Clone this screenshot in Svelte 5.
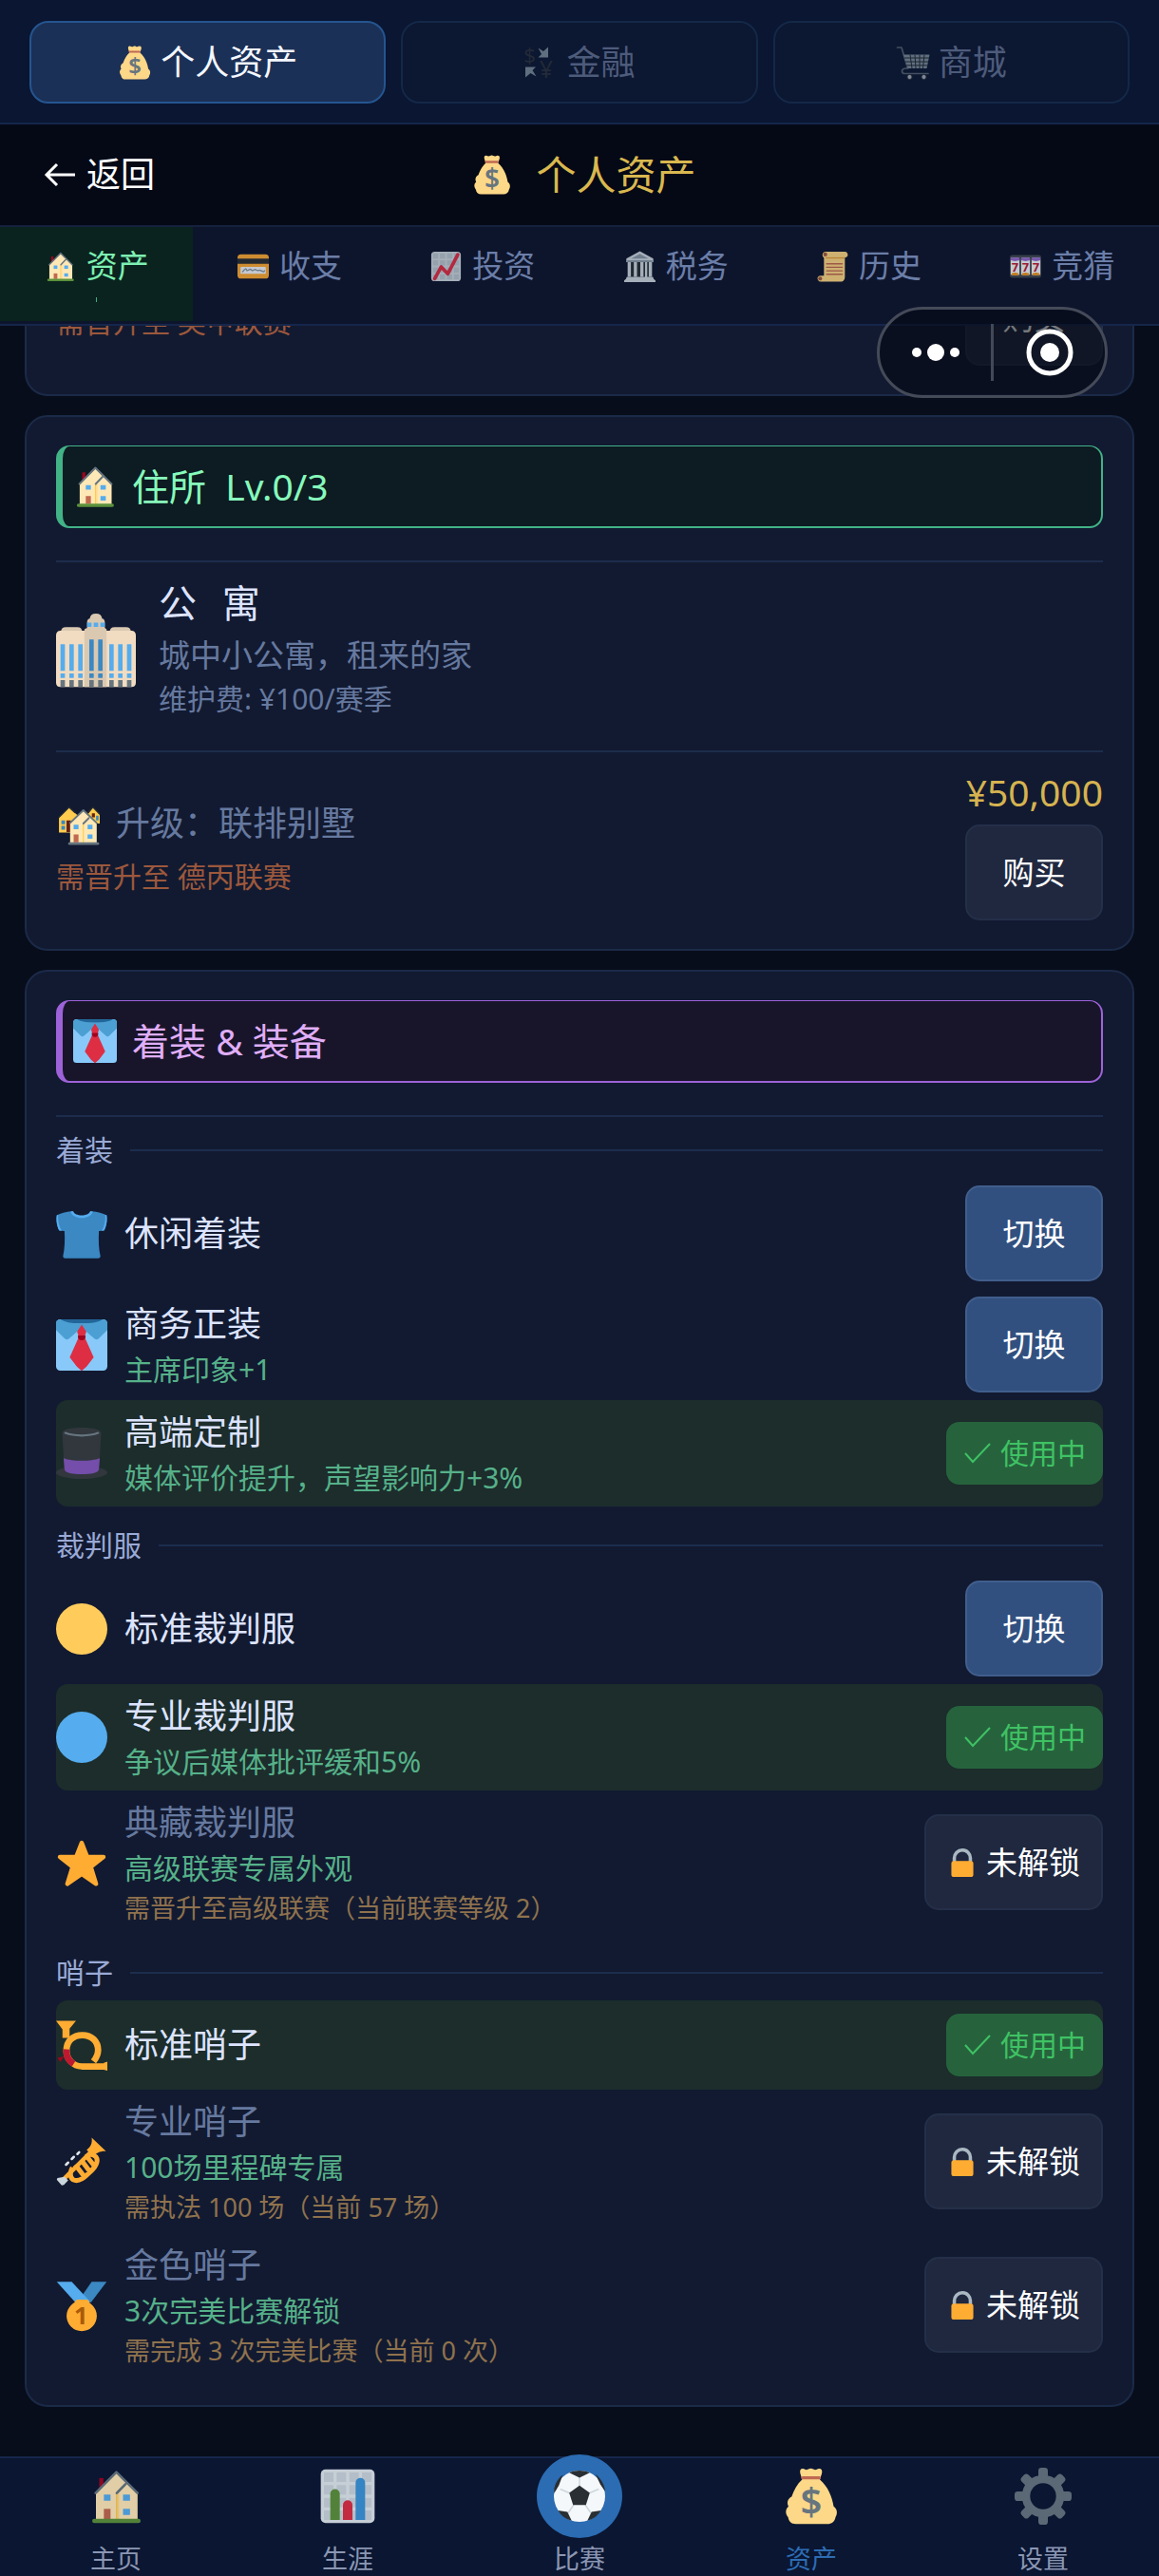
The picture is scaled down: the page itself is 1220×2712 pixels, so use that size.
<script>
  import { onMount } from 'svelte';

  const sections = [
    { icon: 'bag', label: '个人资产', active: true },
    { icon: 'exchange', label: '金融' },
    { icon: 'cart', label: '商城' }
  ];

  const tabs = [
    { icon: 'house', label: '资产', active: true },
    { icon: 'card', label: '收支' },
    { icon: 'trend', label: '投资' },
    { icon: 'bank', label: '税务' },
    { icon: 'scroll', label: '历史' },
    { icon: 'slots', label: '竞猜' }
  ];

  const groups = [
    {
      title: '着装',
      items: [
        { icon: 'tshirt', name: '休闲着装', state: 'owned' },
        { icon: 'tie', name: '商务正装', effect: '主席印象+1', state: 'owned' },
        { icon: 'hat', name: '高端定制', effect: '媒体评价提升，声望影响力+3%', state: 'active' }
      ]
    },
    {
      title: '裁判服',
      items: [
        { icon: 'yellow', name: '标准裁判服', state: 'owned' },
        { icon: 'blue', name: '专业裁判服', effect: '争议后媒体批评缓和5%', state: 'active' },
        { icon: 'star', name: '典藏裁判服', effect: '高级联赛专属外观', need: '需晋升至高级联赛（当前联赛等级 2）', state: 'locked' }
      ]
    },
    {
      title: '哨子',
      items: [
        { icon: 'horn', name: '标准哨子', state: 'active' },
        { icon: 'trumpet', name: '专业哨子', effect: '100场里程碑专属', need: '需执法 100 场（当前 57 场）', state: 'locked' },
        { icon: 'medal', name: '金色哨子', effect: '3次完美比赛解锁', need: '需完成 3 次完美比赛（当前 0 次）', state: 'locked' }
      ]
    }
  ];

  const nav = [
    { icon: 'house', label: '主页' },
    { icon: 'bars', label: '生涯' },
    { icon: 'ball', label: '比赛', center: true },
    { icon: 'bag', label: '资产', active: true },
    { icon: 'gear', label: '设置' }
  ];

  let scroller;
  onMount(() => {
    scroller.scrollTop = scroller.scrollHeight;
  });
</script>

{#snippet houseShape()}
  <path fill="#a0041e" d="M7.5 6.5h2.6v7H7.5z" />
  <path fill="#ffe8b6" d="M5.4 16 18.3 3.5 31.7 16v17H5.4z" />
  <path fill="#ffcc4d" d="M18 16.5h1V33h-1z" />
  <path fill="#ffd983" d="M19 16.5h1V33h-1z" />
  <path fill="none" stroke="#66757f" stroke-width="1.6" stroke-linecap="round" stroke-linejoin="round" d="M5.2 16 18.3 2.8 31.6 16M18.6 16l5.4-5.6" />
  <path fill="#55acee" d="M10.4 17h4.2v3.8h-4.2zM22.5 17h4.4v3.8h-4.4zM22.5 26h4.4v3.8h-4.4z" />
  <path fill="#c1694f" d="M10.4 26h4.2v6.4h-4.2z" />
  <rect x="3" y="32.2" width="30.6" height="2.8" rx="1.4" fill="#5c913b" />
{/snippet}

{#snippet icon(name)}
  <svg class="icon" viewBox="0 0 36 36" aria-hidden="true">
    {#if name === 'bag'}
      <path fill="#fdd888" d="M12.2 7.5 11 3.4C10.6 1.6 11.3.4 12.8.6c1 .2 1.3.7 2.2.7s1.4-.8 2.700-.8 1.700.8 2.700.8 1.400-.6 2.400-.7c1.500-.2 2.300 1 1.900 2.800l-1.300 4.100c5.200 4.500 7.800 11 8.700 16.900 2.200 1.400 2.700 4.500 1.200 6.800-.5 2.900-2.500 4.400-5.100 4.400H8.200c-2.900 0-4.500-1.700-4.800-4.200-1.900-2.300-1.900-5 .2-6.900-1.300-2.400-.5-5 2-6.200 1.400-4 3.400-8 6.600-10.800z" />
      <rect x="11.6" y="5.4" width="12.4" height="2" rx=".9" fill="#bf6952" />
      <text x="18" y="30" text-anchor="middle" font-size="24" font-weight="600" fill="#67757f">$</text>
    {:else if name === 'exchange'}
      <text x="6.5" y="18" text-anchor="middle" font-size="22" fill="#31373d">$</text>
      <text x="24" y="34" text-anchor="middle" font-size="25" fill="#31373d">¥</text>
      <path fill="#99aab5" d="M26 1.500V12.500H15.500l3.500-3.500L15.500 2.500l5.500 3.500zM2 33.500V22.500h11l-3.500 3.500 4 6.500-6-3.500z" />
    {:else if name === 'cart'}
      <path fill="none" stroke="#66757f" stroke-width="1.7" stroke-linecap="round" stroke-linejoin="round" d="M1.500 2H6l6.500 22H9.500c-4 .5-4 5.500 0 5.500H34" />
      <path fill="#99aab5" d="M8 9.500h27.500L32.500 24h-20z" />
      <path fill="none" stroke="#292f33" stroke-width="1" d="M9 13h26M10 17h24M11 20.800h22M15 9.500l2 14.500M20 9.500l1 14.500M25 9.500V24M30 9.500 28.500 24" />
      <circle cx="14.5" cy="33" r="2.6" fill="#ccd6dd" stroke="#292f33" />
      <circle cx="29.5" cy="33" r="2.6" fill="#ccd6dd" stroke="#292f33" />
    {:else if name === 'house'}
      {@render houseShape()}
    {:else if name === 'houses'}
      <path fill="#ffcc4d" d="M2.400 13 10.700 5l9 8v12.400H2.400zM25 12l5.400-7 5.600 6v7h-8z" />
      <path fill="none" stroke="#292f33" stroke-width="1" stroke-linejoin="round" d="M2.200 13.200 10.700 4.600l5 4.600M26 9l4.400-4.400L36 10.200" />
      <path fill="#662113" d="M8.600 15.500h3.600V25H8.600zM29.500 9.500H32V13h-2.500z" />
      <path fill="#3b88c3" d="M4.400 15.500h3v3h-3zM4.400 20h3v3h-3zM33 11.500h2v4h-2z" />
      <path fill="#ffe8b6" d="M11.600 17.500 22.500 7.500l11 10V34H11.600z" />
      <path fill="#ffcc4d" d="M22 17.500h.9V34H22z" />
      <path fill="none" stroke="#66757f" stroke-width="1.5" stroke-linecap="round" stroke-linejoin="round" d="M11.600 17.500 22.500 7l11 10.500M22.500 18l4.500-4.500" />
      <path fill="#55acee" d="M14.500 19h4v3.600h-4zM26 19h4v3.600h-4zM26 27h4v3.600h-4z" />
      <path fill="#c1694f" d="M14.500 27h4v6.500h-4z" />
      <rect x="10" y="33.5" width="25.5" height="2.2" rx="1.1" fill="#66757f" />
    {:else if name === 'card'}
      <rect y="4" width="36" height="28" rx="4" fill="#ffac33" />
      <path fill="#292f33" d="M0 9h36v6H0z" />
      <rect x="3.5" y="18.5" width="29" height="8" rx="1" fill="#f4f7f9" />
      <path fill="none" stroke="#8899a6" stroke-width="1.5" stroke-linecap="round" d="M6 24c3-4 4-4 4.500-1.500 2 1.500 3-3 5.500-.5s3-2 5.500 0 3-1 6 1 3 .5 3.500 0" />
    {:else if name === 'trend'}
      <rect x="1" y="1" width="34" height="34" rx="4" fill="#ccd6dd" />
      <path fill="#b8c5ce" d="M3 3h6v6H3zM11 3h6v6h-6zM19 3h6v6h-6zM27 3h6v6h-6zM3 11h6v6H3zM11 11h6v6h-6zM19 11h6v6h-6zM27 11h6v6h-6zM3 19h6v6H3zM11 19h6v6h-6zM19 19h6v6h-6zM27 19h6v6h-6zM3 27h6v6H3zM11 27h6v6h-6zM19 27h6v6h-6zM27 27h6v6h-6z" />
      <path fill="none" stroke="#dd2e44" stroke-width="4" stroke-linecap="round" stroke-linejoin="round" d="m5 32 7.500-13.500L20 26.500 31.500 4.500" />
    {:else if name === 'bars'}
      <rect x="1" y="1" width="34" height="34" rx="3" fill="#e1e8ed" />
      <path fill="#ccd6dd" d="M3 3h6v6H3zM11 3h6v6h-6zM19 3h6v6h-6zM27 3h6v6h-6zM3 11h6v6H3zM11 11h6v6h-6zM19 11h6v6h-6zM27 11h6v6h-6zM3 19h6v6H3zM11 19h6v6h-6zM19 19h6v6h-6zM27 19h6v6h-6zM3 27h6v6H3zM11 27h6v6h-6zM19 27h6v6h-6zM27 27h6v6h-6z" />
      <path fill="#5c913b" d="M7 33V16.500a3 3 0 0 1 6 0V33z" />
      <path fill="#dd2e44" d="M15 33v-9.500a3 3 0 0 1 6 0V33z" />
      <path fill="#3b94d9" d="M23 33V9.500a3 3 0 0 1 6 0V33z" />
    {:else if name === 'bank'}
      <path fill="#ccd6dd" d="M18 .5 2.500 9v4h31V9z" />
      <path fill="#8899a6" d="M18 3.500 8 9h20zM3.500 11h29v2h-29z" />
      <path fill="#ccd6dd" d="M4 13h4v17H4zM11 13h4v17h-4zM18.500 13h4v17h-4zM28 13h4v17h-4z" />
      <path fill="#292f33" d="M8 13h3v17H8zM15 13h3.500v17H15zM22.500 13H28v17h-5.500z" />
      <path fill="#ccd6dd" d="M24 13h2.500v17H24zM3 30h30l1 2.500 2 1.500v2H0v-2l2-1.500z" />
    {:else if name === 'scroll'}
      <path fill="#ffd983" d="M10 1h22c4 0 4.500 6.500 1 6.500h-1V30c0 3-1.500 5.500-5 5.500H4c-4 0-5-7 0-7h4V8C5 6 6 1 10 1z" />
      <path fill="#e39f3d" d="M10 7.500h22V9H10z" />
      <circle cx="9.5" cy="4.3" r="2.3" fill="#9f5c3f" />
      <circle cx="3.6" cy="32" r="2.3" fill="#9f5c3f" />
      <path fill="none" stroke="#c1694f" stroke-width="1.5" stroke-linecap="round" d="M11 15h18M11 19h18M11 23h18M11 27h18" />
    {:else if name === 'slots'}
      <rect y="5" width="36" height="26" rx="3" fill="#414a50" />
      {#each [1, 13, 25] as x}
        <rect {x} y="8" width="10" height="20" rx="1.5" fill="#f5f8fa" />
        <path fill="#9266cc" d="M{x} 8h10v3l-5 1-5-1z" />
        <path fill="#f4900c" d="M{x + 1} 28v-2l4-1 4 1v2z" />
        <text x={x + 5} y="24" text-anchor="middle" font-size="14" font-weight="700" fill="#be1931">7</text>
      {/each}
    {:else if name === 'building'}
      <path fill="#dac8b1" d="M2.200 11c0-1.500.8-2.300 2.200-2.300h5.200c1.400 0 2.200.8 2.200 2.300zM24.200 11c0-1.500.8-2.300 2.200-2.300h5.200c1.400 0 2.200.8 2.200 2.300z" />
      <path fill="#f1dcc1" d="M2 10.300h32c1.200 0 2 .8 2 2v21.400c0 1.200-.8 2-2 2H2c-1.200 0-2-.8-2-2V12.300c0-1.200.8-2 2-2z" />
      <path fill="#dac8b1" d="M14 9V6.400c0-1 .6-1.500 1.200-1.600.2-1.400 1.100-2.200 2.800-2.200s2.600.8 2.800 2.200c.6.100 1.200.6 1.200 1.600V9l.8.600v26.100h-10V9.600z" />
      <path fill="#55acee" d="M14 6.600h2v2h-2zM17 6.600h2v2h-2zM20 6.600h2v2h-2zM2 16.400h2v12H2zM6 16.400h2v12H6zM10 16.400h2v12h-2zM24 16.400h2v12h-2zM28 16.400h2v12h-2zM32 16.400h2v12h-2zM2 29.600h2v2H2zM6 29.600h2v2H6zM10 29.600h2v2h-2zM24 29.600h2v2h-2zM28 29.600h2v2h-2zM32 29.600h2v2h-2z" />
      <path fill="#3b88c3" d="M15 14.300h2v14.100h-2zM19 14.300h2v14.100h-2zM15 29.600h2v2h-2zM19 29.600h2v2h-2z" />
      <path fill="#66757f" d="M2 32.600h2v3.100H2zM6 32.600h2v3.100H6zM10 32.600h2v3.100h-2zM15 32.600h2v3.100h-2zM19 32.600h2v3.100h-2zM24 32.600h2v3.100h-2zM28 32.600h2v3.100h-2zM32 32.600h2v3.100h-2z" />
    {:else if name === 'tie'}
      <rect width="36" height="36" rx="3" fill="#88c9f9" />
      <path fill="#226699" d="M3 0h30l-3 3H6z" />
      <path fill="#4b9fd3" d="M3 0C1.200 0 0 1.200 0 3v4.500l6.300 6.200c.8.700 1.800.7 2.600 0L15 8.500h6l6.100 5.200c.8.700 1.800.7 2.600 0L36 7.500V3c0-1.800-1.200-3-3-3-3.500 2-8.500 3-15 3S6.500 2 3 0z" />
      <path fill="#88c9f9" d="M12.500 11 15 8.500h6l2.500 2.500L21 16h-6z" />
      <path fill="#dd2e44" d="m18 3.600 3.200 5-1.200 3.700 6.400 14.400-5 6.500-3.400 3-3.400-3-5-6.500L16 12.300l-1.200-3.700z" />
      <path fill="#a0041e" d="M15.300 11.300h5.400c.2 2.200-.9 3.400-2.700 3.400s-2.900-1.200-2.700-3.400z" />
    {:else if name === 'tshirt'}
      <path fill="#3b88c3" d="M11 2.200C7 2.500 3 3.700.5 5c-.6 3.600.3 8 1.800 10.700l3.600.3c.4 6 .2 12.500-1 17.500 0 1.200.6 1.600 1.500 1.600h23.200c.9 0 1.500-.4 1.500-1.600-1.200-5-1.400-11.500-1-17.500l3.600-.3C35.200 13 36.100 8.600 35.500 5 33 3.700 29 2.500 25 2.200c-1 4.500-13 4.500-14 0z" />
      <path fill="#55acee" d="M10.200 2.300 12 2c1 4 11 4 12 0l1.800.3c-1.300 6-14.300 6-15.600 0zM.5 5l1-.5c-.3 4.500.5 8 2.500 11.400l-1.700-.2C.6 13 0 8.600.5 5zM35.500 5l-1-.5c.3 4.500-.5 8-2.500 11.400l1.700-.2C35.400 13 36 8.600 35.500 5z" />
    {:else if name === 'hat'}
      <ellipse cx="18" cy="31.5" rx="18" ry="4.5" fill="#31373d" />
      <path fill="#31373d" d="M4.300 3.500C4.300 1.500 10 0 18 0s13.700 1.500 13.700 3.500C31 14 30.500 25 30.500 28c0 3.500-5 4.500-12.500 4.500S5.500 31.500 5.500 28c0-3-.5-14-1.200-24.500z" />
      <path fill="#744eaa" d="M5.300 21.500c6 2.300 19.400 2.300 25.400 0l-.7 8c-.4 2.200-5.500 3.200-12 3.200s-11.600-1-12-3.200z" />
      <path fill="none" stroke="#66757f" stroke-width="1.5" stroke-linecap="round" d="M6.500 3.700c6 2.400 17 2.400 23 0" />
    {:else if name === 'yellow'}
      <circle cx="18" cy="18" r="18" fill="#ffcc5c" />
    {:else if name === 'blue'}
      <circle cx="18" cy="18" r="18" fill="#55acee" />
    {:else if name === 'star'}
      <path fill="#ffac33" stroke="#ffac33" stroke-width="3" stroke-linejoin="round" d="m18 4 3.900 10H33.300L24.400 20.900l3.700 12L18 26l-10.100 6.900 3.700-12L2.700 14h11.400z" />
    {:else if name === 'horn'}
      <path fill="#ffac33" d="M0 1h14l-4.500 5.500V13H4.500V7z" />
      <path fill="none" stroke="#ffac33" stroke-width="4.5" d="M35 33H18A11 11 0 0 1 7.300 22C7.300 15 12 11 18.500 11s11 4.500 11 10.500c0 3.500-1.200 5.500-3.200 8" />
      <path fill="none" stroke="#be1931" stroke-width="4.5" d="M7.300 21a11 11 0 0 0 5 10.300" />
      <path fill="#a0041e" d="m1 27 4.500-1L3 30l-1.200-1.800z" />
      <path fill="#ffac33" d="m33.500 30.500 2.500-.8v6.300l-2.500-.7z" />
    {:else if name === 'trumpet'}
      <path fill="#ffac33" d="M25 1 35 10.500c-4-.3-6.500 1.200-9 3.700l-4.500-4.500C24.500 7 25.500 5 25 1z" />
      <path fill="none" stroke="#ffac33" stroke-width="3" stroke-linecap="round" d="M5 30.500 24.500 11" />
      <path fill="none" stroke="#ffac33" stroke-width="3.4" stroke-linejoin="round" d="M11.500 22c-1.800 3-2 7 .5 8.500 4 2 8-1.500 12.500-6 4.500-4 5-8 3.500-10-2-2-5-2-7 0M13.500 20l6.500 8.500M17.500 16.500l6 8M21 13.500l6 7.500" />
      <path fill="none" stroke="#e1e8ed" stroke-width="1.7" stroke-linecap="round" d="m7 20 1.500-1.500M11 16l1.500-1.500M15 12.500l1.200-1.200" />
      <path fill="#ccd6dd" d="m6 28.500 2.500 2.500-3 3.200-1.500.3L.5 30.500l.5-1.200z" />
    {:else if name === 'medal'}
      <path fill="#3b88c3" d="M25 1.500h10.500L24.500 16 17 13z" />
      <path fill="#55acee" d="M.5 1.500H11L24 15.500l-4 2-6-1z" />
      <path fill="#ffac33" d="M13 16.500c0-1.700 1-2.500 2.500-2.500h5.500c1.500 0 2.500.8 2.500 2.500z" />
      <circle cx="18" cy="25.5" r="10.6" fill="#ffac33" />
      <text x="17.5" y="31.5" text-anchor="middle" font-size="17" font-weight="700" fill="#aa5b08">1</text>
    {:else if name === 'lock'}
      <path fill="none" stroke="#aab8c2" stroke-width="4" d="M8.500 19v-6.500a9.500 9.500 0 0 1 19 0V19" />
      <rect x="5" y="16" width="26" height="19" rx="3" fill="#ffac33" />
    {:else if name === 'ball'}
      <circle cx="18" cy="18" r="18" fill="#f5f8fa" />
      <path fill="none" stroke="#ccd6dd" stroke-width="1" d="m18 11V3M11.500 16 4.500 13M14 24l-4.500 6.500M22 24l4.500 6.500M24.500 16l7-3" />
      <path fill="#292f33" d="m18 10.500 7.200 5.200-2.700 8.500h-9l-2.700-8.500zM10.800 1.500 18 5l7.200-3.500C20.500-.5 15.500-.5 10.800 1.500zM35.500 14l-3-4.500-3.300-7C33 5.500 35.500 9.500 36 14.500zM33 28l-6.500 1-3 6.200c4.500-1.200 7.500-3.700 9.500-7.200zM3 28l6.500 1 3 6.200C8 34 5 31.500 3 28zM.2 16l3.300-5.500 2.800-7.500C2 6-.2 11 .2 16z" />
    {:else if name === 'gear'}
      <g fill="#66757f">
        {#each [0, 45, 90, 135] as angle}
          <rect x="15" y="0" width="6" height="36" rx="2" transform="rotate({angle} 18 18)" />
        {/each}
      </g>
      <circle cx="18" cy="18" r="13.4" fill="#66757f" />
      <circle class="hub" cx="18" cy="18" r="8.2" />
    {/if}
  </svg>
{/snippet}

{#snippet upgrade(title, need, price)}
  <div class="upgrade">
    <div>
      <div class="upgrade-title">{@render icon('houses')}<span>{title}</span></div>
      <div class="upgrade-need">{need}</div>
    </div>
    <div class="buy">
      <span class="price">{price}</span>
      <button class="btn dim" type="button">购买</button>
    </div>
  </div>
{/snippet}

<div class="page">
  <nav class="sections" aria-label="板块">
    {#each sections as s}
      <button type="button" class="section" class:active={s.active}>
        {@render icon(s.icon)}<span>{s.label}</span>
      </button>
    {/each}
  </nav>

  <header class="header">
    <button class="back" type="button">
      <svg viewBox="0 0 34 28" aria-hidden="true"><path d="M33 14H3M14 3 3 14l11 11" /></svg>
      <span>返回</span>
    </button>
    <h1>{@render icon('bag')}<span>个人资产</span></h1>
  </header>

  <nav class="tabs" aria-label="资产分类">
    {#each tabs as t}
      <button type="button" class="tab" class:active={t.active}>
        <span class="tab-label">{@render icon(t.icon)}<span>{t.label}</span></span>
      </button>
    {/each}
  </nav>

  <main class="scroller" bind:this={scroller}>
    <section class="card">
      <div class="upgrade compact">
        <div class="upgrade-need">需晋升至 英甲联赛</div>
        <button class="btn dim" type="button">购买</button>
      </div>
    </section>

    <section class="card">
      <h2 class="banner green">{@render icon('house')}<span>住所&nbsp;&nbsp;Lv.0/3</span></h2>
      <div class="current">
        {@render icon('building')}
        <div>
          <div class="current-name">公&#8196;&#8196;寓</div>
          <div class="current-desc">城中小公寓，租来的家</div>
          <div class="current-fee">维护费: ¥100/赛季</div>
        </div>
      </div>
      {@render upgrade('升级：联排别墅', '需晋升至 德丙联赛', '¥50,000')}
    </section>

    <section class="card">
      <h2 class="banner purple">{@render icon('tie')}<span>着装 &amp; 装备</span></h2>
      <div class="groups">
        {#each groups as g}
          <div class="group">
            <h3>{g.title}</h3>
            {#each g.items as item}
              <div class="row {item.state}">
                <div class="row-icon">{@render icon(item.icon)}</div>
                <div class="row-text">
                  <div class="row-name">{item.name}</div>
                  {#if item.effect}<div class="row-effect">{item.effect}</div>{/if}
                  {#if item.need}<div class="row-need">{item.need}</div>{/if}
                </div>
                {#if item.state === 'owned'}
                  <button class="btn" type="button">切换</button>
                {:else if item.state === 'active'}
                  <span class="badge">
                    <svg viewBox="0 0 28 24" aria-hidden="true"><path d="m1 12 8 9L27 2" /></svg>使用中
                  </span>
                {:else}
                  <button class="btn dim" type="button">{@render icon('lock')}<span>未解锁</span></button>
                {/if}
              </div>
            {/each}
          </div>
        {/each}
      </div>
    </section>
  </main>

  <nav class="bottom" aria-label="主导航">
    {#each nav as n}
      <a href="#{n.icon}" class:active={n.active} class:center={n.center}>
        <span class="nav-icon">{@render icon(n.icon)}</span>
        <span class="nav-label">{n.label}</span>
      </a>
    {/each}
  </nav>

  <div class="capsule">
    <button type="button" aria-label="更多">
      <svg viewBox="0 0 52 20" width="52" height="20">
        <circle cx="6" cy="10" r="5" /><circle cx="26" cy="10" r="9" /><circle cx="46" cy="10" r="5" />
      </svg>
    </button>
    <i></i>
    <button type="button" aria-label="关闭">
      <svg viewBox="0 0 52 52" width="52" height="52">
        <circle class="ring" cx="26" cy="26" r="22" /><circle cx="26" cy="26" r="10" />
      </svg>
    </button>
  </div>
</div>

<style>
  :global(body) {
    background: #060c19;
  }

  .page {
    position: relative;
    display: flex;
    flex-direction: column;
    height: 100vh;
    overflow: hidden;
    background: #070d1a;
    color: #dde4ff;
    font-family: 'Noto Sans', 'Noto Sans CJK SC', sans-serif;
  }

  button {
    margin: 0;
    padding: 0;
    border: 0;
    background: none;
    color: inherit;
    font: inherit;
    cursor: pointer;
  }

  h1,
  h2,
  h3 {
    margin: 0;
    font-weight: 400;
  }

  .icon {
    display: block;
    flex: none;
    width: 36px;
    height: 36px;
    overflow: visible;
  }

  .hub {
    fill: #0a1632;
  }

  /* top sections */
  .sections {
    display: flex;
    flex: none;
    gap: 16px;
    padding: 22px 31px 20px;
    border-bottom: 2px solid #15264a;
    background: #0a1632;
  }

  .section {
    display: flex;
    flex: 1;
    align-items: center;
    justify-content: center;
    gap: 9px;
    height: 87px;
    box-sizing: border-box;
    border: 2px solid #142848;
    border-radius: 20px;
    background: #0c1731;
    color: #4d5b7b;
    font-size: 36px;
    line-height: 50px;
  }

  .section .icon {
    opacity: 0.6;
  }

  .section.active {
    border-color: #255590;
    background: #1b3056;
    color: #f4f7ff;
  }

  .section.active .icon {
    opacity: 1;
  }

  /* header */
  .header {
    display: grid;
    flex: none;
    grid-template-columns: 1fr auto 1fr;
    align-items: center;
    height: 106px;
    padding: 0 36px 0 46px;
    border-bottom: 2px solid #15213d;
    background: #050916;
  }

  .back {
    display: flex;
    align-items: center;
    gap: 11px;
    color: #fff;
    font-size: 36px;
    line-height: 50px;
  }

  .back svg {
    width: 34px;
    height: 28px;
    fill: none;
    stroke: #fff;
    stroke-width: 3;
  }

  h1 {
    display: flex;
    align-items: center;
    gap: 25px;
    color: #d9b84f;
    font-size: 42px;
    line-height: 60px;
  }

  h1 .icon {
    width: 42px;
    height: 42px;
  }

  /* tabs */
  .tabs {
    display: flex;
    flex: none;
    padding-bottom: 3px;
    border-bottom: 2px solid #15264a;
    background: #0d152d;
  }

  .tab {
    display: flex;
    flex: 1;
    flex-direction: column;
    align-items: center;
    height: 99px;
    padding-top: 16px;
    color: #6b7ea8;
    font-size: 33px;
    line-height: 50px;
  }

  .tab-label {
    display: flex;
    align-items: center;
    gap: 11px;
  }

  .tab .icon {
    width: 33px;
    height: 33px;
    opacity: 0.8;
  }

  .tab.active {
    background: #0a231e;
    color: #7df0b2;
  }

  .tab.active .icon {
    opacity: 1;
  }

  .tab.active::after {
    content: '';
    width: 1px;
    height: 5px;
    margin-top: 8px;
    background: #3fae83;
  }

  /* scrolling content */
  .scroller {
    display: flex;
    flex: 1;
    flex-direction: column;
    gap: 20px;
    min-height: 0;
    padding: 20px 26px 52px;
    overflow-y: auto;
    scrollbar-width: none;
  }

  .card {
    flex: none;
    padding: 30px 31px;
    border: 2px solid #1b2a48;
    border-radius: 24px;
    background: #121a31;
  }

  .banner {
    display: flex;
    align-items: center;
    gap: 16px;
    height: 84px;
    padding-left: 11px;
    border-style: solid;
    border-width: 1px 2px 2px 7px;
    border-radius: 14px;
    font-size: 39px;
    line-height: 56px;
  }

  .banner .icon {
    width: 46px;
    height: 46px;
  }

  .green {
    border-color: #42b287;
    background: #0d1b22;
    color: #86f9bb;
  }

  .purple {
    border-color: #9d62d8;
    background: #18152a;
    color: #e0aef8;
  }

  .current {
    display: flex;
    align-items: center;
    gap: 24px;
    margin-top: 34px;
    padding: 13px 0 31px;
    border-top: 2px solid #1d2c4b;
  }

  .current .icon {
    width: 84px;
    height: 84px;
  }

  .current-name {
    font-size: 40px;
    line-height: 60px;
  }

  .current-desc {
    color: #66799f;
    font-size: 33px;
    line-height: 50px;
  }

  .current-fee {
    color: #66799f;
    font-size: 30px;
    line-height: 42px;
    padding-bottom: 2px;
  }

  .upgrade {
    display: flex;
    align-items: center;
    justify-content: space-between;
    padding-top: 17px;
    border-top: 2px solid #1d2c4b;
  }

  .upgrade-title {
    display: flex;
    align-items: center;
    gap: 17px;
    color: #66799f;
    font-size: 36px;
    line-height: 66px;
  }

  .upgrade-title .icon {
    width: 46px;
    height: 46px;
  }

  .upgrade-need {
    color: #9c583c;
    font-size: 30px;
    line-height: 45px;
  }

  .compact .upgrade-need {
    padding-top: 8px;
  }

  .buy {
    display: flex;
    flex-direction: column;
    align-items: flex-end;
    gap: 9px;
  }

  .price {
    color: #d5b350;
    font-size: 39px;
    line-height: 50px;
  }

  .btn {
    display: flex;
    flex: none;
    align-items: center;
    justify-content: center;
    gap: 9px;
    box-sizing: border-box;
    min-width: 145px;
    height: 101px;
    padding: 0 22px;
    border: 2px solid #415e8c;
    border-radius: 15px;
    background: #31507f;
    color: #fff;
    font-size: 33px;
    line-height: 46px;
  }

  .btn.dim {
    border-color: #242f48;
    background: #20283f;
  }

  .btn .icon {
    width: 32px;
    height: 32px;
  }

  .groups {
    margin-top: 34px;
    border-top: 2px solid #1d2c4b;
  }

  .group + .group {
    margin-top: 6px;
  }

  h3 {
    display: flex;
    align-items: center;
    gap: 18px;
    padding: 12px 0 6px;
    color: #9aaad6;
    font-size: 30px;
    line-height: 46px;
  }

  h3::after {
    content: '';
    flex: 1;
    height: 2px;
    background: #1c2d4d;
  }

  .row {
    display: flex;
    align-items: center;
    padding: 8px 0;
    border-radius: 12px;
  }

  .row.active {
    background: #1c2d2c;
  }

  .row-icon {
    display: flex;
    flex: none;
    align-items: center;
    min-height: 78px;
    margin-right: 18px;
  }

  .row-icon .icon {
    width: 54px;
    height: 54px;
  }

  .row-text {
    flex: 1;
    min-width: 0;
  }

  .row-name {
    font-size: 36px;
    line-height: 52px;
  }

  .row.locked .row-name {
    color: #66799f;
  }

  .row-effect {
    color: #56b189;
    font-size: 30px;
    line-height: 44px;
  }

  .row-need {
    color: #8f724d;
    font-size: 27px;
    line-height: 39px;
  }

  .badge {
    display: flex;
    flex: none;
    align-items: center;
    gap: 10px;
    padding: 0 18px 0 19px;
    border-radius: 14px;
    background: #26633d;
    color: #3fc264;
    font-size: 30px;
    line-height: 66px;
  }

  .badge svg {
    width: 28px;
    height: 24px;
    fill: none;
    stroke: currentColor;
    stroke-width: 2;
  }

  /* bottom navigation */
  .bottom {
    display: flex;
    flex: none;
    height: 124px;
    border-top: 2px solid #15264a;
    background: #0a1632;
  }

  .bottom a {
    display: flex;
    flex: 1;
    flex-direction: column;
    align-items: center;
    color: #8b96b3;
    font-size: 27px;
    line-height: 36px;
    text-decoration: none;
  }

  .bottom a.active {
    color: #2d6cb3;
  }

  .nav-icon {
    display: flex;
    align-items: center;
    justify-content: center;
    width: 90px;
    height: 90px;
    margin: -4px 0 4px;
    border-radius: 50%;
  }

  .nav-icon .icon {
    width: 60px;
    height: 60px;
    opacity: 0.88;
  }

  .active .nav-icon .icon {
    opacity: 1;
  }

  .center .nav-icon {
    background: #2b6cb3;
  }

  .center .nav-icon .icon {
    width: 54px;
    height: 54px;
    opacity: 1;
  }

  /* floating window control */
  .capsule {
    position: absolute;
    top: 323px;
    right: 54px;
    display: flex;
    align-items: center;
    box-sizing: border-box;
    width: 243px;
    height: 96px;
    border: 3px solid #454a58;
    border-radius: 48px;
    background: rgba(4, 8, 16, 0.55);
  }

  .capsule button {
    display: flex;
    flex: 1;
    align-items: center;
    justify-content: center;
  }

  .capsule i {
    width: 3px;
    height: 60px;
    background: #434956;
  }

  .capsule svg {
    fill: #fff;
  }

  .capsule .ring {
    fill: none;
    stroke: #fff;
    stroke-width: 5;
  }
</style>
